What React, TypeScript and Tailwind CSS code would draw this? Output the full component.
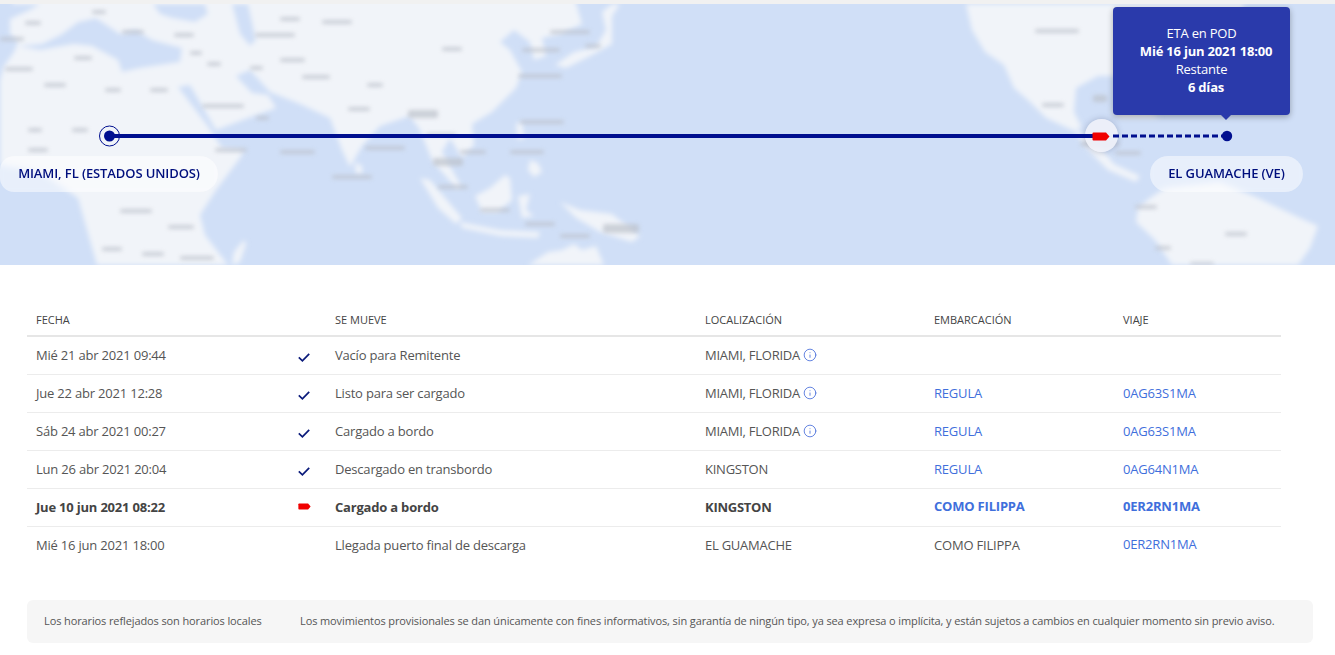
import React from 'react';
import { Info } from 'lucide-react';

type Move = {
  date: string;
  status?: 'done' | 'current';
  move: string;
  place: string;
  info?: boolean;
  vessel?: string;
  vesselLink?: boolean;
  voyage?: string;
};

const moves: Move[] = [
  { date: 'Mié 21 abr 2021 09:44', status: 'done', move: 'Vacío para Remitente', place: 'MIAMI, FLORIDA', info: true },
  { date: 'Jue 22 abr 2021 12:28', status: 'done', move: 'Listo para ser cargado', place: 'MIAMI, FLORIDA', info: true, vessel: 'REGULA', vesselLink: true, voyage: '0AG63S1MA' },
  { date: 'Sáb 24 abr 2021 00:27', status: 'done', move: 'Cargado a bordo', place: 'MIAMI, FLORIDA', info: true, vessel: 'REGULA', vesselLink: true, voyage: '0AG63S1MA' },
  { date: 'Lun 26 abr 2021 20:04', status: 'done', move: 'Descargado en transbordo', place: 'KINGSTON', vessel: 'REGULA', vesselLink: true, voyage: '0AG64N1MA' },
  { date: 'Jue 10 jun 2021 08:22', status: 'current', move: 'Cargado a bordo', place: 'KINGSTON', vessel: 'COMO FILIPPA', vesselLink: true, voyage: '0ER2RN1MA' },
  { date: 'Mié 16 jun 2021 18:00', move: 'Llegada puerto final de descarga', place: 'EL GUAMACHE', vessel: 'COMO FILIPPA', voyage: '0ER2RN1MA' },
];

// blurred place names of the base map: x, y, width, height
const mapLabels = [
  [25, 21, 16, 4], [0, 37, 24, 4], [5, 67, 28, 4], [44, 83, 22, 4], [74, 56, 18, 4], [92, 10, 14, 4], [122, 30, 22, 4],
  [105, 88, 16, 4], [150, 88, 18, 4], [174, 33, 20, 4], [190, 51, 12, 4], [207, 62, 14, 4], [250, 66, 13, 4], [202, 104, 42, 4],
  [256, 116, 13, 4], [280, 58, 25, 4], [255, 33, 40, 4], [280, 17, 20, 4], [28, 128, 14, 4], [72, 128, 16, 4], [28, 148, 20, 4],
  [120, 209, 32, 4], [168, 225, 26, 4], [102, 247, 20, 4], [142, 252, 22, 4], [180, 256, 34, 4], [215, 148, 32, 4],
  [280, 150, 35, 4], [322, 20, 30, 4], [302, 75, 28, 4], [367, 83, 16, 4], [442, 47, 20, 4],
  [348, 107, 22, 4], [408, 110, 30, 8], [426, 133, 30, 3], [365, 146, 40, 4], [332, 175, 40, 4],
  [460, 150, 26, 4], [510, 150, 34, 4], [433, 158, 30, 8], [438, 185, 30, 4], [480, 208, 30, 4], [525, 222, 30, 4], [560, 234, 30, 4],
  [603, 224, 36, 9], [520, 120, 44, 4], [518, 74, 44, 4], [522, 48, 38, 4], [550, 30, 40, 4], [585, 44, 16, 4],
  [1035, 29, 44, 4], [1042, 103, 22, 4], [1093, 95, 14, 7], [1080, 142, 40, 4], [1115, 151, 26, 4], [1135, 205, 22, 4], [1225, 232, 22, 4],
  [1155, 246, 16, 4], [1190, 262, 24, 3],
];

const ShipMark = ({ className }: { className: string }) => (
  <svg viewBox="0 0 18 9" className={className}>
    <path d="M0.5 1.5 Q0.5 0.5 1.5 0.5 L14 0.5 L17.5 4.5 L14 8.5 L1.5 8.5 Q0.5 8.5 0.5 7.5 Z" fill="#f00000" />
  </svg>
);

const WorldMap = () => (
  <svg viewBox="0 4 1335 261" className="absolute inset-0 h-full w-full">
    <defs>
      <filter id="soft" x="-5%" y="-5%" width="110%" height="110%">
        <feGaussianBlur stdDeviation="2.4" />
      </filter>
      <filter id="softer" x="-5%" y="-5%" width="110%" height="110%">
        <feGaussianBlur stdDeviation="2" />
      </filter>
    </defs>
    <rect x="0" y="4" width="1335" height="261" fill="#d0dff7" />
    <path d="M0 201 H1335" stroke="#dae5f9" strokeWidth="2" filter="url(#soft)" />
    <g fill="#f1f4f9" filter="url(#soft)">
      {/* Africa, Europe and Asia */}
      <path d="M14 -4 L10 12 L10 34 L18 42 L14 52 L4 66 L0 80 L0 165 L40 172 L78 198 L97 265 L228 265 L205 235 L200 215 L216 190 L240 158 L244 150 L222 148 L207 125 L178 87 L190 85 L216 130 L248 118 L276 108 L268 95 L252 93 L236 76 L250 70 L270 92 L300 104 L330 118 L342 150 L350 167 L362 146 L380 126 L410 116 L420 130 L432 160 L442 172 L458 190 L460 184 L442 152 L450 138 L462 158 L474 145 L472 124 L492 112 L516 88 L522 72 L510 50 L500 42 L514 30 L530 42 L534 60 L546 56 L542 38 L560 34 L582 24 L574 -4 Z" />
      {/* Japan */}
      <path d="M555 65 L574 52 L596 47 L606 30 L602 12 L612 4 L620 4 L612 16 L612 44 L590 56 L566 68 Z" />
      {/* Islands of SE Asia and Oceania */}
      <path d="M420 178 L430 180 L462 218 L456 224 L438 208 Z" />
      <path d="M460 222 L500 230 L540 232 L538 238 L500 236 L462 228 Z" />
      <path d="M475 196 L490 188 L505 175 L510 178 L512 200 L498 212 L482 212 Z" />
      <path d="M516 124 L522 122 L524 138 L518 140 Z" />
      <path d="M530 160 L538 163 L542 172 L534 177 L528 170 Z" />
      <path d="M518 196 L530 194 L526 210 L534 216 L522 218 Z" />
      <path d="M560 202 L580 210 L612 214 L640 236 L632 242 L600 232 L576 218 Z" />
      <path d="M528 265 L548 252 L562 250 L574 244 L582 250 L596 246 L604 265 Z" />
      <path d="M355 162 L362 166 L362 174 L356 174 Z" />
      <path d="M234 252 L244 240 L246 244 L240 262 L232 265 Z" />
      {/* Black Sea, Caspian, Mediterranean as water on top */}
      <path d="M153 4 L205 4 L208 14 L195 22 L172 18 L160 14 Z" fill="#d0dff7" />
      <path d="M232 4 L248 4 L256 40 L250 46 L240 34 Z" fill="#d0dff7" />
      <path d="M18 46 L42 44 L62 34 L78 22 L96 18 L120 34 L136 30 L152 40 L182 48 L180 62 L140 68 L122 72 L118 60 L92 46 L74 44 L40 50 Z" fill="#d0dff7" />
      <path d="M0 4 L40 4 L30 10 L8 20 L2 26 L0 28 Z" fill="#d0dff7" />
      {/* North America */}
      <path d="M966 4 L972 30 L985 52 L1004 65 L1014 88 L1030 102 L1046 118 L1072 130 L1082 128 L1074 112 L1076 88 L1098 76 L1126 76 L1150 92 L1158 100 L1162 62 L1220 44 L1245 4 Z" />
      {/* Central America */}
      <path d="M1072 128 L1094 140 L1114 164 L1140 176 L1136 182 L1108 170 L1088 150 Z" />
      <path d="M1110 110 L1150 112 L1160 118 L1120 118 Z" />
      {/* South America */}
      <path d="M1150 198 L1165 188 L1220 182 L1258 198 L1300 218 L1318 226 L1310 248 L1298 265 L1172 265 L1155 240 L1136 222 L1138 208 Z" />
    </g>
    <g fill="#bcc1ca" filter="url(#softer)" opacity="0.7">
      {mapLabels.map(([x, y, w, h], i) => (
        <rect key={i} x={x} y={y} width={w} height={h} rx="2" />
      ))}
    </g>
  </svg>
);

const RouteLine = () => (
  <svg viewBox="0 4 1335 261" className="absolute inset-0 h-full w-full">
    <path d="M110 136 H1096" stroke="#000f8f" strokeWidth="4" />
    <path d="M1113 136 H1224" stroke="#000f8f" strokeWidth="3" strokeDasharray="6 3" />
    <circle cx="1227" cy="136" r="5.2" fill="#000f8f" />
    <circle cx="109.5" cy="136" r="10" fill="none" stroke="#000f8f" strokeWidth="1" />
    <circle cx="109.5" cy="136" r="5.5" fill="#000f8f" />
  </svg>
);

const MapPanel = () => (
  <section className="relative h-[261px] overflow-hidden">
    <WorldMap />

    {/* Ship marker sits under the route, the boat itself on top */}
    <div className="absolute left-[1085px] top-[115px] h-[33px] w-[33px] rounded-full bg-[#eef1f8]/90 shadow-[0_0_6px_rgba(60,70,110,0.3)]" />
    <RouteLine />
    <ShipMark className="absolute left-[1092px] top-[128px] h-[9px] w-[18px]" />

    {/* ETA tooltip */}
    <div className="absolute left-[1113px] top-[3px] flex h-[108px] w-[177px] flex-col items-center rounded bg-[#2a3aab] pt-[17px] text-[13px] leading-[18px] tracking-[-0.2px] text-white shadow-[0_2px_6px_rgba(0,0,0,0.3)]">
      <span>ETA en POD</span>
      <span className="pl-[9px] font-bold">Mié 16 jun 2021 18:00</span>
      <span>Restante</span>
      <span className="pl-[9px] font-bold">6 días</span>
      <span className="absolute -bottom-[5px] left-[108px] h-0 w-0 border-x-[5px] border-t-[5px] border-x-transparent border-t-[#2a3aab]" />
    </div>

    {/* Port labels */}
    <div className="absolute left-0 top-[152px] flex h-9 w-[218px] items-center justify-center rounded-r-[18px] rounded-l-[14px] bg-white/50 text-[13px] font-semibold tracking-[-0.1px] text-[#000f7d] backdrop-blur-[2px]">
      MIAMI, FL (ESTADOS UNIDOS)
    </div>
    <div className="absolute left-[1150px] top-[152px] flex h-9 w-[153px] items-center justify-center rounded-[18px] bg-white/50 text-[13px] font-semibold tracking-[-0.1px] text-[#000f7d] backdrop-blur-[2px]">
      EL GUAMACHE (VE)
    </div>
  </section>
);

const gridCols = 'grid grid-cols-[262px_37px_370px_229px_189px_1fr] items-center pl-[9px]';

const MovesTable = () => (
  <div className="ml-[27px] mt-[37px] w-[1254px] text-[13px] tracking-[-0.2px] text-[#555]">
    <div className={`${gridCols} h-[35px] border-b-2 border-[#e6e6e6] pt-[3px] text-[11px] tracking-normal text-[#444]`}>
      <span>FECHA</span>
      <span />
      <span>SE MUEVE</span>
      <span>LOCALIZACIÓN</span>
      <span>EMBARCACIÓN</span>
      <span>VIAJE</span>
    </div>
    {moves.map((m, i) => {
      const current = m.status === 'current';
      return (
        <div
          key={i}
          className={`${gridCols} h-[38px] ${i < moves.length - 1 ? 'border-b border-[#ececec]' : ''} ${current ? 'font-bold text-[#444]' : ''}`}
        >
          <span>{m.date}</span>
          <span className="flex h-4 items-center">
            {m.status === 'done' && (
              <svg viewBox="0 0 12 9" className="mt-[3px] h-[9px] w-3" fill="none" stroke="#0a1a7a" strokeWidth="1.7">
                <path d="M0.8 4.4 L4.4 7.8 L11.2 0.8" />
              </svg>
            )}
            {current && <ShipMark className="-mt-[2px] h-[7px] w-[13px]" />}
          </span>
          <span>{m.move}</span>
          <span className="flex items-center gap-[3px] tracking-[-0.25px]">
            {m.place}
            {m.info && <Info className="-mt-[2px] h-[14px] w-[14px] text-[#4f73dc]" strokeWidth={1.5} />}
          </span>
          <span className={m.vesselLink ? `text-[#3f6fdc] ${current ? '-mt-0.5' : ''}` : ''}>{m.vessel}</span>
          <span className={`text-[#3f6fdc] ${i >= 4 ? '-mt-0.5' : ''}`}>{m.voyage}</span>
        </div>
      );
    })}
  </div>
);

export default function App() {
  return (
    <div className="h-[655px] w-[1335px] overflow-hidden bg-white font-['Open_Sans',sans-serif]">
      <div className="h-1 bg-[#f1f1f1]" />
      <MapPanel />
      <MovesTable />
      <div className="ml-[27px] mt-[35px] flex h-[43px] w-[1286px] items-center rounded-md bg-[#f6f6f6] text-[11px] tracking-[-0.11px] text-[#555]">
        <span className="w-[273px] pl-[17px]">Los horarios reflejados son horarios locales</span>
        <span>
          Los movimientos provisionales se dan únicamente con fines informativos, sin garantía de ningún tipo, ya sea expresa o implícita, y están sujetos a cambios en cualquier momento sin previo aviso.
        </span>
      </div>
    </div>
  );
}
